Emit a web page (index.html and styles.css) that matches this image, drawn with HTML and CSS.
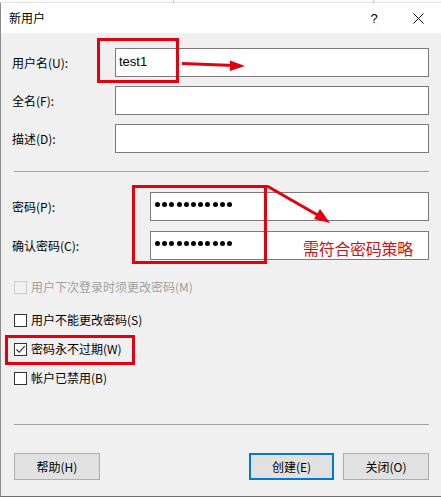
FILE: index.html
```html
<!DOCTYPE html>
<html lang="zh-CN">
<head>
<meta charset="utf-8">
<title>新用户</title>
<link rel="stylesheet" href="styles.css">
</head>
<body>
<div class="window">
  <div class="topstrip"><span class="tl tl1"></span><span class="tl tl2"></span></div>
  <div class="titlebar">
    <span class="title">新用户</span>
    <span class="help">?</span>
    <span class="close">
      <svg width="11" height="11" viewBox="0 0 11 11"><path d="M0.5 0.5 L10.5 10.5 M10.5 0.5 L0.5 10.5" stroke="#111" stroke-width="1" fill="none"/></svg>
    </span>
  </div>
  <div class="body">
    <div class="form form1">
      <label class="lbl">用户名(U):</label>
      <div class="field"><span class="val">test1</span></div>
      <label class="lbl">全名(F):</label>
      <div class="field"></div>
      <label class="lbl">描述(D):</label>
      <div class="field"></div>
    </div>
    <div class="sep sep1"></div>
    <div class="form form2">
      <label class="lbl">密码(P):</label>
      <div class="field pw"><span class="dots"><i></i><i></i><i></i><i></i><i></i><i></i><i></i><i></i><i></i><i></i><i></i></span></div>
      <label class="lbl">确认密码(C):</label>
      <div class="field pw"><span class="dots"><i></i><i></i><i></i><i></i><i></i><i></i><i></i><i></i><i></i><i></i><i></i></span></div>
    </div>
    <div class="checks">
      <div class="chk disabled c1"><span class="box"></span><span>用户下次登录时须更改密码(M)</span></div>
      <div class="chk c2"><span class="box"></span><span>用户不能更改密码(S)</span></div>
      <div class="chk c3"><span class="box"><svg width="11" height="11" viewBox="0 0 11 11"><path d="M1.5 5.5 L4.2 8.3 L9.8 2.2" stroke="#222" stroke-width="1.1" fill="none"/></svg></span><span>密码永不过期(W)</span></div>
      <div class="chk c3"><span class="box"></span><span>帐户已禁用(B)</span></div>
    </div>
    <div class="sep sep2"></div>
    <div class="buttons">
      <button class="btn">帮助(H)</button>
      <span class="spacer"></span>
      <button class="btn default">创建(E)</button>
      <button class="btn">关闭(O)</button>
    </div>
  </div>
  <svg class="annot" width="441" height="497" viewBox="0 0 441 497">
    <g stroke="#e3000f" stroke-width="3" fill="none">
      <rect x="98.5" y="39.5" width="79" height="42"/>
      <rect x="133.5" y="186.5" width="132" height="76"/>
      <rect x="6.5" y="336.5" width="127" height="27"/>
      <line x1="182" y1="63.5" x2="234" y2="65.5"/>
      <line x1="267" y1="186" x2="321" y2="217"/>
    </g>
    <g fill="#e3000f">
      <polygon points="245,66 230,60.5 230,71"/>
      <polygon points="330,223 314,219 320,209"/>
    </g>
  </svg>
  <div class="note">需符合密码策略</div>
</div>
</body>
</html>
```

FILE: styles.css
```css
* { box-sizing: border-box; }
html, body { margin: 0; padding: 0; }
body {
  width: 441px;
  height: 497px;
  overflow: hidden;
  background: #f0f0f0;
  font-family: "Noto Sans CJK SC", "Noto Sans", sans-serif;
  font-size: 12px;
  color: #000;
}
.window {
  position: relative;
  width: 441px;
  height: 497px;
  display: flex;
  flex-direction: column;
}
.topstrip {
  position: relative;
  height: 3px;
  background: #fafafa;
  border-bottom: 1px solid #e4e4e4;
}
.tl { position: absolute; top: 0; width: 1px; height: 3px; background: #c8c8c8; }
.tl1 { left: 173px; }
.tl2 { left: 373px; }
.titlebar {
  height: 30px;
  background: #fff;
  border-left: 1px solid #8a8a8a;
  display: flex;
  align-items: center;
  padding-left: 8px;
}
.title { flex: 1; font-size: 12px; line-height: 16px; }
.help { width: 12px; font-family: "Liberation Sans", sans-serif; font-size: 13px; margin-right: 33px; text-align: center; }
.close { width: 11px; height: 11px; margin-right: 17px; display: flex; }
.body {
  flex: 1;
  border-left: 1px solid #8a8a8a;
  border-bottom: 1px solid #6e6e6e;
  padding: 15px 12px 0 11px;
  display: flex;
  flex-direction: column;
}
.form {
  display: grid;
  align-items: center;
}
.form1 { grid-template-columns: 103px 1fr; grid-auto-rows: 29px; row-gap: 9px; }
.form2 { grid-template-columns: 138px 1fr; grid-auto-rows: 29px; row-gap: 10px; }
.lbl { line-height: 16px; }
.field {
  height: 29px;
  background: #fff;
  border: 1px solid #7a7a7a;
  display: flex;
  align-items: center;
  padding: 0 0 3px 3px;
}
.val { font-family: "Liberation Sans", sans-serif; font-size: 13px; }
.pw { padding: 0 0 4px 4px; }
.dots { display: flex; gap: 2.2px; }
.dots i { display: block; width: 5px; height: 5px; border-radius: 50%; background: #000; }
.sep { height: 1px; background: #a0a0a0; margin-left: 2px; }
.sep1 { margin-top: 18px; margin-bottom: 20px; }
.checks { display: flex; flex-direction: column; margin-top: 18px; padding-left: 2px; }
.chk { height: 18px; display: flex; align-items: center; gap: 4px; line-height: 16px; }
.c2 { margin-top: 15px; }
.c3 { margin-top: 11px; }
.box {
  width: 13px; height: 13px;
  border: 1px solid #333;
  background: #fff;
  display: flex; align-items: center; justify-content: center;
}
.disabled { color: #a0a0a0; }
.disabled .box { border-color: #cccccc; background: #f0f0f0; }
.sep2 { margin-top: 37px; }
.buttons { display: flex; margin-top: 28px; padding-left: 2px; }
.spacer { flex: 1; }
.btn {
  width: 86px;
  height: 27px;
  background: #e1e1e1;
  border: 1px solid #adadad;
  font-family: "Noto Sans CJK SC", "Noto Sans", sans-serif;
  font-size: 12px;
  color: #000;
  padding: 0;
  margin: 0;
}
.btn.default { border: 2px solid #0078d7; margin-right: 9px; width: 85px; }
.annot { position: absolute; left: 0; top: 0; pointer-events: none; }
.note {
  position: absolute;
  left: 303px;
  top: 238px;
  font-size: 16px;
  line-height: 20px;
  color: #d0101a;
  letter-spacing: -0.3px;
}
```
